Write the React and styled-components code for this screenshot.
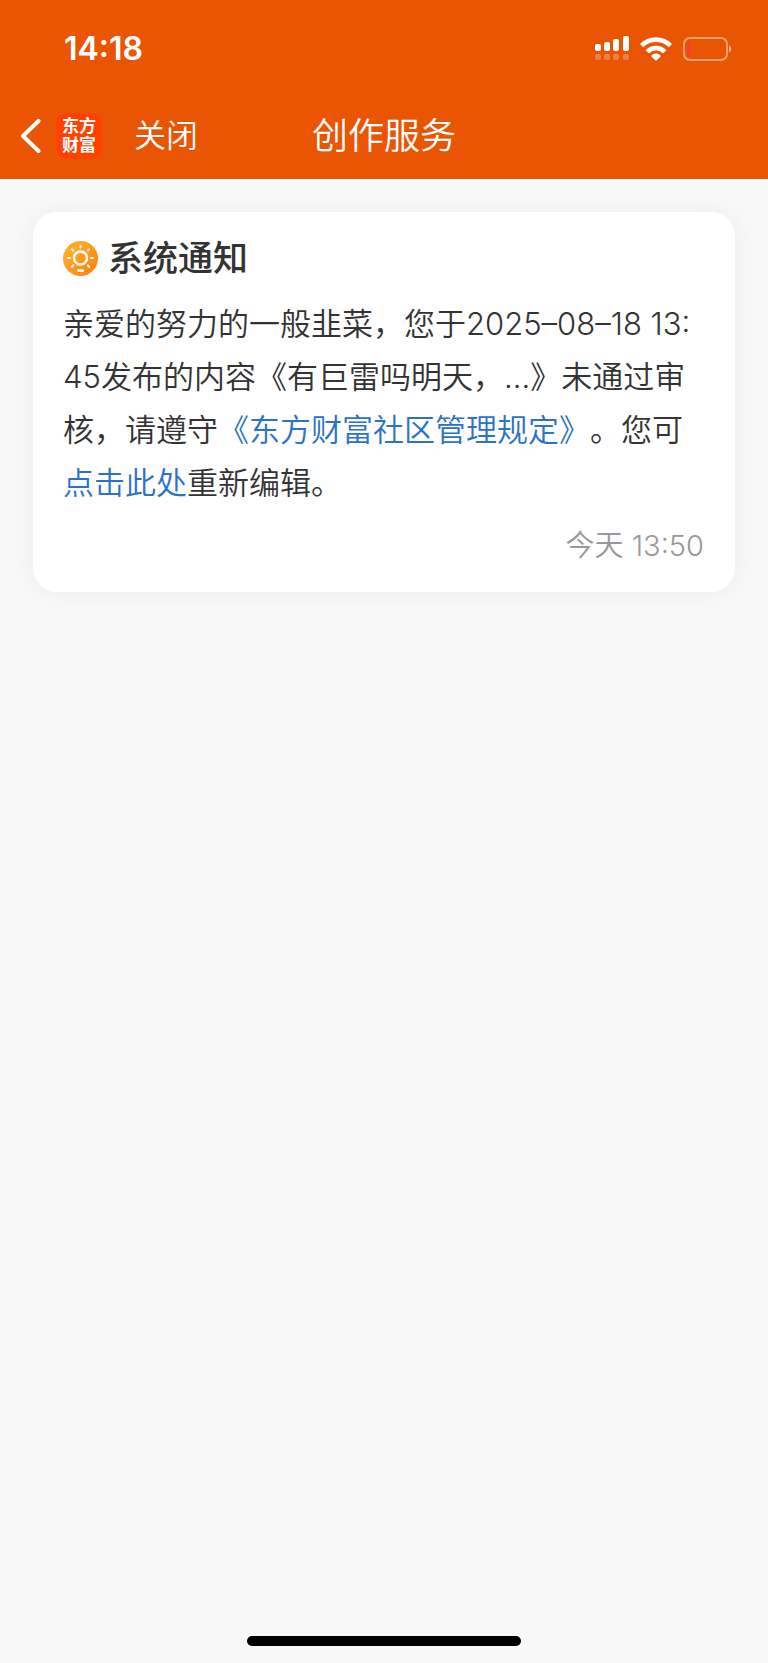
import React from "react";
import styled, { createGlobalStyle } from "styled-components";

const GlobalStyle = createGlobalStyle`
	* {
		box-sizing: border-box;
	}

	body {
		margin: 0;
		background: #f8f8f8;
		color: #333333;
		font-family: Inter, "Noto Sans CJK SC", sans-serif;
		font-weight: 350;
	}
`;

const Page = styled.div`
	display: flex;
	flex-direction: column;
	min-height: 100vh;
`;

const Header = styled.header`
	background: #ea5504;
	color: white;
	padding-bottom: 5px;
`;

const StatusBar = styled.div`
	display: flex;
	align-items: center;
	justify-content: space-between;
	height: 98px;
	padding: 0 35px 0 64px;
`;

const Clock = styled.time`
	font-size: 32px;
	font-weight: 600;
	line-height: 38px;
`;

const StatusIcons = styled.div`
	display: flex;
	align-items: center;
	gap: 11px;
`;

const NavBar = styled.nav`
	display: grid;
	grid-template-columns: 1fr auto 1fr;
	align-items: center;
	height: 76px;
	padding: 0 20px;
`;

const NavLeft = styled.div`
	display: flex;
	align-items: center;
`;

const NavButton = styled.button`
	display: flex;
	align-items: center;
	padding: 0;
	border: 0;
	background: none;
	color: inherit;
	font-family: inherit;
	font-size: 32px;
	font-weight: inherit;
	line-height: 50px;
	cursor: pointer;
`;

const Logo = styled.div`
	width: 46px;
	height: 46px;
	margin: 0 32px 0 15px;
	padding-top: 4px;
	border-radius: 9px;
	background: #ff4200;
	font-size: 17px;
	font-weight: 700;
	line-height: 19px;
	text-align: center;
`;

const NavTitle = styled.h1`
	margin: 0;
	font-size: 36px;
	font-weight: inherit;
	line-height: 50px;
`;

const Content = styled.main`
	flex: 1;
	padding: 33px;
`;

const Card = styled.article`
	padding: 22px 31px 26px 30px;
	border-radius: 24px;
	background: white;
	box-shadow: 0 0 24px rgba(0, 0, 0, 0.05);
`;

const CardHeader = styled.div`
	display: flex;
	align-items: center;
	gap: 10px;
`;

const CardTitle = styled.h2`
	margin: 0;
	font-size: 35px;
	font-weight: 500;
	line-height: 48px;
`;

const Message = styled.p`
	margin: 15px 0 17px;
	font-size: 31px;
	line-height: 53px;
	word-break: break-all;
	text-spacing-trim: space-all;
`;

const Link = styled.a`
	color: #2b72c8;
	text-decoration: none;
`;

const SentAt = styled.time`
	display: block;
	color: #999999;
	font-size: 29px;
	line-height: 40px;
	text-align: right;
`;

const HomeBar = styled.div`
	width: 274px;
	height: 10px;
	margin: 0 auto 17px;
	border-radius: 5px;
	background: black;
`;

const Signal = () => (
	<svg width="34" height="26" viewBox="0 0 34 26" fill="white">
		<rect x="0" y="8" width="6" height="7" rx="2" />
		<rect x="9" y="6" width="6" height="9" rx="2" />
		<rect x="18" y="3" width="6" height="12" rx="2" />
		<rect x="28" y="0" width="6" height="15" rx="2" />
		<g opacity="0.25">
			<rect x="0" y="18" width="6" height="6" rx="2" />
			<rect x="9" y="18" width="6" height="6" rx="2" />
			<rect x="18" y="18" width="6" height="6" rx="2" />
			<rect x="28" y="18" width="6" height="6" rx="2" />
		</g>
	</svg>
);

const Wifi = () => (
	<svg width="32" height="24" viewBox="0 0 32 24">
		<g fill="none" stroke="white" strokeWidth="4.6">
			<path d="M1.6 8.6a20.4 20.4 0 0 1 28.8 0" />
			<path d="M7.2 14.8a12.4 12.4 0 0 1 17.6 0" />
		</g>
		<path
			d="M16 24l-4.6-4.4a1 1 0 0 1 .1-1.3 6.8 6.8 0 0 1 9 0 1 1 0 0 1 .1 1.3z"
			fill="white"
		/>
	</svg>
);

const Battery = () => (
	<svg width="50" height="24" viewBox="0 0 50 24">
		<rect
			x="1"
			y="1"
			width="43"
			height="22"
			rx="6"
			fill="none"
			stroke="white"
			strokeOpacity="0.45"
			strokeWidth="2"
		/>
		<path d="M46 8.500c3 1 3 6 0 7z" fill="white" opacity="0.5" />
		<path d="M7 5v14c-2 0-3-1-3-3V8c0-2 1-3 3-3z" fill="#ff3b30" />
	</svg>
);

const BackArrow = () => (
	<svg width="21" height="36" viewBox="0 0 21 36">
		<path
			d="M18.500 3L3 18l15.500 15"
			fill="none"
			stroke="white"
			strokeWidth="4"
			strokeLinecap="round"
			strokeLinejoin="round"
		/>
	</svg>
);

const rays = [-135, -90, -45, 0, 45, 135, 180];

const SunBadge = () => (
	<svg width="35" height="35" viewBox="0 0 35 35">
		<defs>
			<linearGradient id="sun" x1="0" y1="0" x2="1" y2="1">
				<stop offset="0" stopColor="#ffb82e" />
				<stop offset="1" stopColor="#ff7d0c" />
			</linearGradient>
		</defs>
		<circle cx="17.5" cy="17.5" r="17.5" fill="url(#sun)" />
		<g fill="none" stroke="white" strokeWidth="2" strokeLinecap="round">
			<circle cx="17.5" cy="17" r="6.5" strokeWidth="2.4" />
			{rays.map(angle => (
				<path
					key={angle}
					d="M28 17h1.800"
					transform={`rotate(${angle} 17.5 17)`}
				/>
			))}
			<path d="M15.300 29.600h4.400" strokeWidth="2.6" />
		</g>
	</svg>
);

class App extends React.Component {
	render() {
		return (
			<Page>
				<GlobalStyle />
				<Header>
					<StatusBar>
						<Clock>14:18</Clock>
						<StatusIcons>
							<Signal />
							<Wifi />
							<Battery />
						</StatusIcons>
					</StatusBar>
					<NavBar>
						<NavLeft>
							<NavButton aria-label="返回">
								<BackArrow />
							</NavButton>
							<Logo>
								东方
								<br />
								财富
							</Logo>
							<NavButton>关闭</NavButton>
						</NavLeft>
						<NavTitle>创作服务</NavTitle>
					</NavBar>
				</Header>
				<Content>
					<Card>
						<CardHeader>
							<SunBadge />
							<CardTitle>系统通知</CardTitle>
						</CardHeader>
						<Message>
							亲爱的努力的一般韭菜，您于2025–08–18 13:45发布的内容《有巨雷吗明天，...》未通过审核，请遵守
							<Link href="#rules">《东方财富社区管理规定》</Link>
							。您可<Link href="#edit">点击此处</Link>重新编辑。
						</Message>
						<SentAt>今天 13:50</SentAt>
					</Card>
				</Content>
				<HomeBar />
			</Page>
		);
	}
}

export default App;
